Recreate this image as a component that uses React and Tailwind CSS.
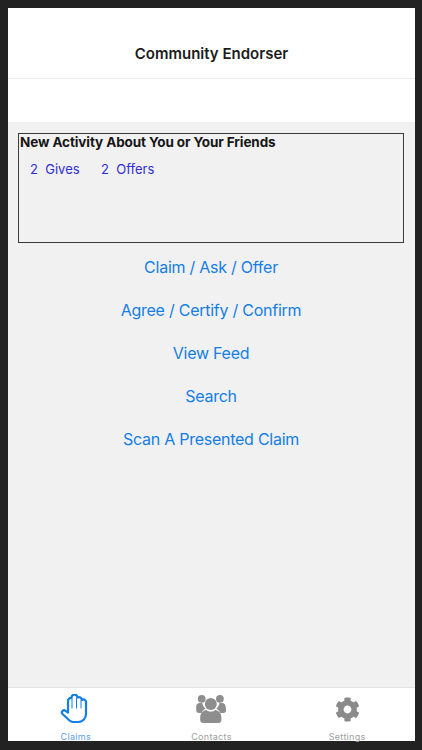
import React from 'react';
import { FaCog } from 'react-icons/fa';

const links = ['Claim / Ask / Offer', 'Agree / Certify / Confirm', 'View Feed', 'Search', 'Scan A Presented Claim'];

const HandIcon = () => (
  <svg className="-ml-[3px]" width="28" height="30" viewBox="0 0 28 30" fill="none" stroke="currentColor" strokeLinecap="round" strokeLinejoin="round">
    <path
      strokeWidth="2.2"
      d="M8 18.500V7a3 3 0 0 1 3.500-3a3 3 0 0 1 6-.5a3 3 0 0 1 4.500 2.500a2.500 2.500 0 0 1 4 2V20a8 8 0 0 1-8 8h-5a5 5 0 0 1-3.500-1.500L2.500 20a2.200 2.200 0 0 1 3-3.200z"
    />
    <path strokeWidth="1" d="M12 5v9M16.500 4v10M21 6v8" />
  </svg>
);

const UsersIcon = () => (
  <svg width="30" height="30" viewBox="0 0 30 30" fill="currentColor">
    <circle cx="5.700" cy="4.800" r="3.900" />
    <circle cx="23.900" cy="4.800" r="3.900" />
    <path d="M0.200 12.500c0-2 1.600-3.400 3.400-3.400h2.600c.7 3 2 4.600 3.400 5.400c-2.200 1.400-3.600 2.800-4 4.500H3c-1.600 0-2.800-1.200-2.800-2.800z" />
    <path d="M29.600 12.500c0-2-1.600-3.400-3.400-3.400h-2.600c-.7 3-2 4.600-3.400 5.400c2.200 1.400 3.600 2.800 4 4.500h3.400c1.400 0 2.600-1.200 2.600-2.800z" />
    <circle cx="14.800" cy="10" r="6" />
    <path d="M4.200 23.500c0-4.500 3-6.800 6-7.500c1.500 1.200 3 1.700 4.600 1.700s3.100-.5 4.600-1.700c3 .7 6 3 6 7.500v2.500c0 1.800-1.300 3-3 3H7.200c-1.700 0-3-1.200-3-3z" />
  </svg>
);

const tabs = [
  { label: 'Claims', icon: <HandIcon />, color: 'text-[#147ee8]', labelColor: 'text-[#5b9ff0]' },
  { label: 'Contacts', icon: <UsersIcon />, color: 'text-[#8e8e8e]', labelColor: 'text-[#a0a0a0]' },
  { label: 'Settings', icon: <FaCog className="text-[25px]" />, color: 'text-[#8a8a8a]', labelColor: 'text-[#a0a0a0]' },
];

const App = () => {
  return (
    <div className="w-[422px] h-[750px] bg-[#222222] pt-2 pl-2 pr-[7px] pb-[9px] font-['Inter',sans-serif] overflow-hidden">
      <div className="h-full flex flex-col bg-white">
        {/* Header */}
        <div className="h-[71px] shrink-0 border-b border-[#ececec] flex items-center justify-center pt-[23px]">
          <h1 className="text-[15px] font-semibold text-[#1c1c1c]">Community Endorser</h1>
        </div>
        <div className="h-[43px] shrink-0 bg-white"></div>

        {/* Content */}
        <div className="flex-1 bg-[#f1f1f1] pt-[11px] pl-[10px] pr-[11px]">
          <div className="h-[110px] border border-[#3c3c3c] px-px">
            <p className="text-[13.5px] leading-[16px] font-bold tracking-[-0.1px] text-[#161616]">New Activity About You or Your Friends</p>
            <div className="flex pl-[10px] mt-[11px] text-[13px] leading-[16px] text-[#2f2fd8]">
              <span className="w-[71px] whitespace-pre">2  Gives</span>
              <span className="whitespace-pre">2  Offers</span>
            </div>
          </div>
          <div className="flex flex-col items-center mt-[2px]">
            {links.map((link) => (
              <a key={link} className="h-[43px] flex items-center text-[16px] tracking-[-0.25px] text-[#147ee8]">{link}</a>
            ))}
          </div>
        </div>

        {/* Tab bar */}
        <div className="h-[54px] shrink-0 bg-white border-t border-[#e4e4e4] grid grid-cols-3">
          {tabs.map(({ label, icon, color, labelColor }) => (
            <div key={label} className="flex flex-col items-center">
              <div className={`h-[42px] flex items-center justify-center ${color}`}>
                {icon}
              </div>
              <span className={`mt-px text-[9px] leading-[11px] tracking-[0.3px] ${labelColor}`}>{label}</span>
            </div>
          ))}
        </div>
      </div>
    </div>
  );
};

export default App;
